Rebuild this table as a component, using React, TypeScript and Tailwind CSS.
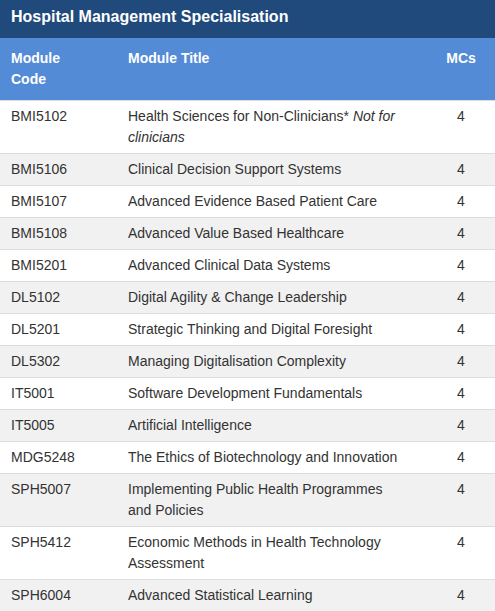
import React from "react";

type Module = { code: string; title: React.ReactNode; mcs: number };

const modules: Module[] = [
    {
        code: "BMI5102",
        title: (
            <>
                Health Sciences for Non-Clinicians* <em>Not for clinicians</em>
            </>
        ),
        mcs: 4,
    },
    { code: "BMI5106", title: "Clinical Decision Support Systems", mcs: 4 },
    { code: "BMI5107", title: "Advanced Evidence Based Patient Care", mcs: 4 },
    { code: "BMI5108", title: "Advanced Value Based Healthcare", mcs: 4 },
    { code: "BMI5201", title: "Advanced Clinical Data Systems", mcs: 4 },
    { code: "DL5102", title: "Digital Agility & Change Leadership", mcs: 4 },
    { code: "DL5201", title: "Strategic Thinking and Digital Foresight", mcs: 4 },
    { code: "DL5302", title: "Managing Digitalisation Complexity", mcs: 4 },
    { code: "IT5001", title: "Software Development Fundamentals", mcs: 4 },
    { code: "IT5005", title: "Artificial Intelligence", mcs: 4 },
    { code: "MDG5248", title: "The Ethics of Biotechnology and Innovation", mcs: 4 },
    { code: "SPH5007", title: "Implementing Public Health Programmes and Policies", mcs: 4 },
    { code: "SPH5412", title: "Economic Methods in Health Technology Assessment", mcs: 4 },
    { code: "SPH6004", title: "Advanced Statistical Learning", mcs: 4 },
];

export default function App() {
    return (
        <div className="w-[495px] bg-white font-['Liberation_Sans',Arial,sans-serif] text-[14px] leading-[21px] text-[#333]">
            <div className="h-[38px] bg-[#214a7c] px-[11px] pt-[6px]">
                <h3 className="text-[16px] leading-[22px] font-bold text-white">Hospital Management Specialisation</h3>
            </div>
            <table className="w-full border-collapse table-fixed">
                <colgroup>
                    <col className="w-[117px]" />
                    <col className="w-[310px]" />
                    <col />
                </colgroup>
                <thead>
                    <tr className="bg-[#548bd6] text-white font-bold align-top">
                        <th className="text-left py-[10px] pl-[11px] pr-[11px]">
                            Module
                            <br />
                            Code
                        </th>
                        <th className="text-left py-[10px] pl-[11px] pr-[24px]">Module Title</th>
                        <th className="text-center py-[10px]">MCs</th>
                    </tr>
                </thead>
                <tbody>
                    {modules.map((m, i) => (
                        <tr key={m.code} className={`align-top ${i % 2 === 0 ? "bg-white" : "bg-[#f1f1f1]"}`}>
                            <td className="border-t border-[#ddd] py-[5px] pl-[11px] pr-[11px]">{m.code}</td>
                            <td className="border-t border-[#ddd] py-[5px] pl-[11px] pr-[24px]">{m.title}</td>
                            <td className="border-t border-[#ddd] py-[5px] text-center">{m.mcs}</td>
                        </tr>
                    ))}
                </tbody>
            </table>
        </div>
    );
}
